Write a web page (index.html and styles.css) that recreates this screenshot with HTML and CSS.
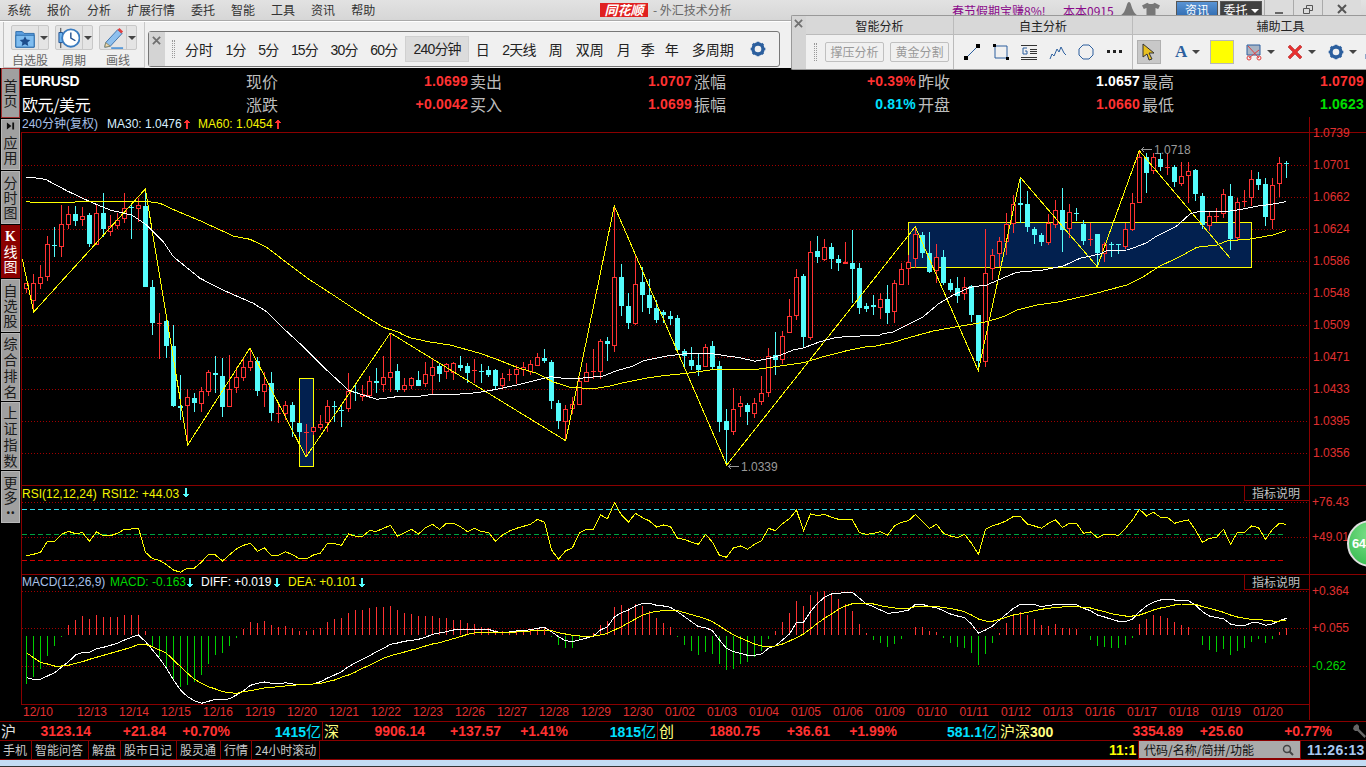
FILE: index.html
```html
<!DOCTYPE html>
<html lang="zh-CN">
<head>
<meta charset="utf-8">
<title>同花顺 - 外汇技术分析</title>
<link rel="stylesheet" href="styles.css">
</head>
<body>
<div class="app">
  <header class="menubar">
    <nav class="menu">
      <span>系统</span><span>报价</span><span>分析</span><span>扩展行情</span><span>委托</span><span>智能</span><span>工具</span><span>资讯</span><span>帮助</span>
    </nav>
    <span class="logo">同花顺</span>
    <span class="apptitle">- 外汇技术分析</span>
    <span class="promo">春节假期宝赚8%!</span>
    <span class="promo user">本本0915</span>
    <svg class="topicon first" viewBox="0 0 18 14"><path d="M9 0c2 0 2 4 4 8 1 3 3 4 5 6H0c2-2 4-3 5-6 2-4 2-8 4-8z"/></svg>
    <svg class="topicon" viewBox="0 0 20 14"><path d="M6 0c1 2 7 2 8 0l6 3-2 4-3-1v8H5V6L2 7 0 3z"/></svg>
    <span class="topbtn blue">资讯</span>
    <span class="topbtn dark">委托<i class="caret white"></i></span>
    <span class="winbtn"><svg viewBox="0 0 12 12"><path d="M2 9h8v2H2z"/></svg></span>
    <span class="winbtn"><svg viewBox="0 0 12 12"><path class="ol" d="M1.5 5.5h6v5h-6zM4.5 5V2.5h6v5H8"/></svg></span>
    <span class="winbtn wide"><svg viewBox="0 0 12 12"><path class="ol thick" d="M2 2l8 8M10 2l-8 8"/></svg></span>
  </header>

  <div class="toolbar">
    <div class="bigtools">
      <div class="bigtool">
        <div class="split">
          <svg class="bigicon" viewBox="0 0 24 24"><path d="M2 5h7l2 2h11v15H2z" fill="#5b9fe0" stroke="#2a6aa8"/><path d="M2 9h20v13H2z" fill="#7fbdf0" stroke="#2a6aa8"/><path d="M12 10l1.800 3.600 4 .5-3 2.700.8 4-3.600-2-3.600 2 .8-4-3-2.700 4-.5z" fill="#1e4d8c"/></svg>
          <span class="arrowcell"><i class="caret"></i></span>
        </div>
        <span class="cap">自选股</span>
      </div>
      <div class="bigtool">
        <div class="split">
          <svg class="bigicon" viewBox="0 0 24 24"><path d="M3 1v22" stroke="#333" fill="none"/><path d="M1 6h4v11H1z" fill="#6db3ee" stroke="#1e4d8c"/><circle cx="14" cy="12" r="9.500" fill="#fff" stroke="#3a7cc0" stroke-width="2"/><path d="M14 6v6l5 3" fill="none" stroke="#1e4d8c" stroke-width="1.500"/></svg>
          <span class="arrowcell"><i class="caret"></i></span>
        </div>
        <span class="cap">周期</span>
      </div>
      <div class="bigtool">
        <div class="split">
          <svg class="bigicon" viewBox="0 0 24 24"><path d="M4 17L17 3l5 4L9 21l-6 1z" fill="#8ec0ee" stroke="#3a70a8"/><path d="M17 3l2-2 4 4-2 2z" fill="#e04040"/><path d="M4 17l5 4-6 1z" fill="#f0d8b0" stroke="#886"/><path d="M10 23h13" stroke="#5a9ad8" stroke-width="2"/></svg>
          <span class="arrowcell"><i class="caret"></i></span>
        </div>
        <span class="cap">画线</span>
      </div>
    </div>
    <div class="periods">
      <span class="closecol"><svg viewBox="0 0 10 10"><path class="ol thick grayx" d="M1 1l8 8M9 1L1 9"/></svg></span>
      <span class="grip"></span>
      <span class="p p1">分时</span><span class="p d">1分</span><span class="p d">5分</span><span class="p d">15分</span><span class="p d">30分</span><span class="p d">60分</span>
      <span class="p d sel">240分钟</span><span class="p">日</span><span class="p d">2天线</span><span class="p">周</span><span class="p">双周</span><span class="p">月</span><span class="p tight">季</span><span class="p tight">年</span><span class="p">多周期</span>
      <svg class="gear" viewBox="0 0 24 24"><circle cx="12" cy="12" r="7.500" fill="none" stroke="#2c5f9e" stroke-width="5"/><path class="teeth" d="M12 1v22M1 12h22M4.200 4.200l15.600 15.600M19.800 4.200L4.200 19.800"/></svg>
    </div>
  </div>

  <div class="floatpanel">
    <span class="fclose"><svg viewBox="0 0 10 10"><path class="ol thick grayx" d="M1 1l8 8M9 1L1 9"/></svg></span>
    <section class="fsec s1">
      <h3>智能分析</h3>
      <div class="fbody">
        <span class="grip small"></span>
        <span class="fbtn">撑压分析</span><span class="fbtn">黄金分割</span>
      </div>
    </section>
    <section class="fsec s2">
      <h3>自主分析</h3>
      <div class="fbody tools2">
        <svg class="ti" viewBox="0 0 16 16"><path d="M2 14L14 2" stroke="#2c5f9e" fill="none"/><path d="M0 12h4v4H0zM12 0h4v4h-4z"/></svg>
        <svg class="ti" viewBox="0 0 16 16"><path d="M2 2h12v12H2z" stroke="#2c5f9e" fill="none"/><path d="M0 0h3v3H0zM13 13h3v3h-3z"/></svg>
        <svg class="ti" viewBox="0 0 16 16"><path d="M0 15.500h16M0 13.500h16M9 9.500h7M9 7.500h7M9 5.500h7M0 1.500h16" stroke="#333" fill="none"/><path d="M6 4H2v6h4V7H4" stroke="#2c5f9e" fill="none"/></svg>
        <svg class="ti" viewBox="0 0 16 16"><path d="M0 15l2-5 2 2 3-7 2 3 2-5 3 6 2 2" stroke="#2c5f9e" fill="none"/></svg>
        <svg class="ti" viewBox="0 0 16 16"><path d="M5 1h6l4 4v6l-4 4H5l-4-4V5z" stroke="#2c5f9e" fill="none"/></svg>
        <svg class="ti" viewBox="0 0 16 16"><path d="M0 6h3v3H0zM6 6h3v3H6zM12 6h3v3h-3z" fill="#222"/></svg>
      </div>
    </section>
    <section class="fsec s3">
      <h3>辅助工具</h3>
      <div class="fbody tools3">
        <span class="cursor"><svg viewBox="0 0 16 18"><path d="M2 1l11 9H8l3 6-3 1-2-6-4 3z" fill="#e8c020" stroke="#333"/></svg></span>
        <span class="tool afont"><b>A</b><i class="caret"></i></span>
        <span class="swatch"></span>
        <span class="tool"><svg class="ti" viewBox="0 0 16 16"><path d="M1 1h13v10H1z" fill="#a8b4c4" stroke="#2c5f9e"/><path d="M2 2l11 12M13 6L3 14" stroke="#e04040" fill="none"/><circle cx="3" cy="14" r="2" fill="none" stroke="#e04040"/><circle cx="13" cy="14" r="2" fill="none" stroke="#e04040"/></svg><i class="caret"></i></span>
        <span class="tool"><svg class="ti" viewBox="0 0 16 16"><path d="M3 1l5 5 5-5 2 2-5 5 5 5-2 2-5-5-5 5-2-2 5-5-5-5z" fill="#e83030" stroke="#a02020" stroke-width=".5"/></svg><i class="caret"></i></span>
        <span class="tool"><svg class="ti" viewBox="0 0 24 24"><circle cx="12" cy="12" r="7.500" fill="none" stroke="#2c5f9e" stroke-width="5"/><path class="teeth" d="M12 1v22M1 12h22M4.200 4.200l15.600 15.600M19.800 4.200L4.200 19.800"/></svg><i class="caret"></i></span>
        <svg class="ti partial" viewBox="0 0 16 16"><path d="M1 0v16M0 10h3v5H0z" stroke="#2c5f9e" fill="none"/></svg>
      </div>
    </section>
  </div>

  <main class="workspace">
    <aside class="sidetabs">
      <div class="tab t-home">首页</div>
      <div class="tab t-app"><svg class="mini" viewBox="0 0 10 8"><path d="M1 0l5 4-5 4zM7 0h2v8H7z"/></svg><span>应用</span></div>
      <div class="tab t3">分时图</div>
      <div class="tab t3 active"><b class="kchar">K</b>线图</div>
      <div class="tab t3">自选股</div>
      <div class="tab t4">综合排名</div>
      <div class="tab t4">上证指数</div>
      <div class="tab t-more">更多<span class="dots">..</span></div>
    </aside>
    <section class="content">
      <div class="quotes">
        <div class="qname">EURUSD</div>
        <div class="qc"><span class="ql">现价</span><span class="qv red">1.0699</span></div>
        <div class="qc"><span class="ql">卖出</span><span class="qv red">1.0707</span></div>
        <div class="qc"><span class="ql">涨幅</span><span class="qv red">+0.39%</span></div>
        <div class="qc"><span class="ql">昨收</span><span class="qv white">1.0657</span></div>
        <div class="qc"><span class="ql">最高</span><span class="qv red">1.0709</span></div>
        <div class="qname cn">欧元/美元</div>
        <div class="qc"><span class="ql">涨跌</span><span class="qv red">+0.0042</span></div>
        <div class="qc"><span class="ql">买入</span><span class="qv red">1.0699</span></div>
        <div class="qc"><span class="ql">振幅</span><span class="qv cyan">0.81%</span></div>
        <div class="qc"><span class="ql">开盘</span><span class="qv red">1.0660</span></div>
        <div class="qc"><span class="ql">最低</span><span class="qv green">1.0623</span></div>
      </div>
      <div class="chartwrap">
        <svg id="chart" class="chart" viewBox="21 117 1345 603" width="1345" height="603">
          <g id="grid"></g>
          <rect class="zone" x="299.500" y="378.500" width="14" height="88"/>
          <rect class="zone" x="908.500" y="222.500" width="343" height="45"/>
          <g id="plots"></g>
          <g class="frame">
            <path d="M21.500 132.500H1309.500V704.500H21.500zM21.500 485.500H1366M21.500 574.500H1366M1309.500 117V720M1309.500 132.500H1366"/>
            <path d="M1244.500 485.500V500.500H1309M1244.500 574.500V589.500H1309"/>
          </g>
          <g class="t12">
            <text class="c-blue" x="22" y="128">240分钟(复权)</text>
            <text class="c-ice" x="107" y="128">MA30: 1.0476</text>
            <text class="c-yel" x="198" y="128">MA60: 1.0454</text>
            <text class="c-yel" x="22" y="498">RSI(12,12,24)</text>
            <text class="c-yel" x="102" y="498">RSI12: +44.03</text>
            <text class="c-blue" x="22" y="586">MACD(12,26,9)</text>
            <text class="c-grn" x="110" y="586">MACD: -0.163</text>
            <text class="c-wht" x="201" y="586">DIFF: +0.019</text>
            <text class="c-yel" x="288" y="586">DEA: +0.101</text>
            <text class="c-gry" x="1252" y="498">指标说明</text>
            <text class="c-gry" x="1252" y="587">指标说明</text>
            <text class="c-note" x="1154" y="154">1.0718</text>
            <text class="c-note" x="741" y="471">1.0339</text>
          </g>
          <path class="arrow up" d="M187 119l3 4h-2v6h-2v-6h-2zM278 119l3 4h-2v6h-2v-6h-2z"/>
          <path class="arrow dn" d="M186 498l3-4h-2v-6h-2v6h-2zM190 588l3-4h-2v-6h-2v6h-2zM277 588l3-4h-2v-6h-2v6h-2zM362 588l3-4h-2v-6h-2v6h-2z"/>
          <path class="note" d="M1141 149.500h11M1141 149.500l3-2M1141 149.500l3 2M728 466.500h11M728 466.500l3-2M728 466.500l3 2"/>
          <g id="yaxis" class="t12 c-axis"></g>
          <g class="t12 c-axis">
            <text x="1312" y="506">+76.43</text><text x="1312" y="541">+49.01</text>
            <text x="1312" y="595">+0.364</text><text x="1312" y="632">+0.055</text><text class="c-grn" x="1312" y="670">-0.262</text>
          </g>
          <g id="xaxis" class="t12 c-axis xa"></g>
        </svg>
        <div class="ball">64</div>
      </div>
    </section>
  </main>

  <div class="indexrow">
    <span class="ixn">沪</span><span class="num">3123.14</span><span class="num">+21.84</span><span class="num">+0.70%</span><span class="vol sep">1415<em>亿</em></span>
    <span class="ixn y">深</span><span class="num">9906.14</span><span class="num">+137.57</span><span class="num">+1.41%</span><span class="vol sep">1815<em>亿</em></span>
    <span class="ixn y">创</span><span class="num">1880.75</span><span class="num">+36.61</span><span class="num">+1.99%</span><span class="vol sep">581.1<em>亿</em></span>
    <span class="ixn y">沪深<b>300</b></span><span class="num">3354.89</span><span class="num">+25.60</span><span class="num">+0.77%</span>
    <svg class="wrench" viewBox="0 0 14 14"><path d="M1 2l3-2 2 2v3l7 7-1.500 2L4.500 7H2L0 5z"/></svg>
  </div>

  <footer class="bottombar">
    <span class="bt">手机</span><span class="bt">智能问答</span><span class="bt">解盘</span><span class="bt">股市日记</span><span class="bt">股灵通</span><span class="bt">行情</span><span class="bt small">24小时滚动</span>
    <span class="ticker">11:1</span>
    <span class="search">代码/名称/简拼/功能<svg viewBox="0 0 12 12"><circle cx="5" cy="5" r="3.500" fill="none" stroke="#444" stroke-width="1.500"/><path d="M7.500 7.500L11 11" stroke="#444" stroke-width="2"/></svg></span>
    <span class="clock">11:26:13</span>
  </footer>
  <div class="strip"></div>
</div>
<script src="chart.js"></script>
</body>
</html>
```

FILE: styles.css
```css
* { box-sizing: border-box; }
html, body { margin: 0; padding: 0; background: #000; }
body { width: 1366px; height: 767px; overflow: hidden; font-family: "Noto Sans CJK SC", "Liberation Sans", sans-serif; }
.app { position: relative; width: 1366px; height: 767px; display: flex; flex-direction: column; background: #000; }

/* menu bar */
.menubar { height: 21px; display: flex; align-items: flex-start; background: linear-gradient(#e2e2e2, #d6d6d6); border-bottom: 1px solid #aaa; overflow: hidden; flex: none; }
.menu { display: flex; gap: 16px; padding-left: 7px; font-size: 12px; line-height: 20px; color: #333; width: 600px; flex: none; }
.logo { margin-top: 3px; width: 48px; height: 14px; background: #e02020; color: #fff; font: italic bold 13px/14px "Noto Sans CJK SC", sans-serif; text-align: center; flex: none; }
.apptitle { margin-left: 5px; width: 85px; font-size: 12px; line-height: 20px; color: #666; white-space: nowrap; flex: none; }
.promo { margin-left: 214px; width: 92px; font-size: 12px; line-height: 22px; color: #8a0a8a; white-space: nowrap; flex: none; }
.promo.user { margin-left: 19px; width: 49px; }
.topicon { width: 18px; height: 14px; margin: 2px 4px 0 0; fill: #777; flex: none; }
.topicon.first { margin-left: 8px; }
.topbtn { margin: 1px 2px 0 0; width: 42px; height: 17px; font-size: 12px; line-height: 16px; color: #fff; text-align: center; flex: none; border: 1px solid #555; }
.topbtn.blue { margin-left: 12px; background: linear-gradient(#5a94d4, #2f6bb0); }
.topbtn.dark { background: #404040; }
.winbtn { width: 29px; height: 18px; display: flex; align-items: center; justify-content: center; background: #dcdcdc; border-left: 1px solid #aaa; border-bottom: 1px solid #aaa; flex: none; }
.winbtn.wide { width: 39px; }
.winbtn svg { width: 12px; height: 12px; fill: #666; }
.ol { fill: none; stroke: #555; stroke-width: 1; }
.ol.thick { stroke-width: 2; }
.ol.grayx { stroke: #707070; }

/* toolbar */
.toolbar { height: 47px; flex: none; display: flex; align-items: flex-start; background: #f0f0f0; border-top: 1px solid #fff; position: relative; }
.bigtools { width: 142px; height: 46px; margin-left: 3px; padding: 3px 0 0 7px; display: flex; gap: 6px; border-left: 1px solid #c0c0c0; border-right: 1px solid #c8c8c8; border-bottom: 1px solid #c0c0c0; flex: none; }
.bigtool { width: 38px; display: flex; flex-direction: column; align-items: center; }
.split { width: 38px; height: 25px; display: flex; background: #e4e4e4; border: 1px solid #c8c8c8; border-radius: 2px; }
.bigicon { width: 22px; height: 22px; margin: 1px 2px; flex: none; }
.arrowcell { flex: 1; border-left: 1px solid #c8c8c8; display: flex; align-items: center; justify-content: center; }
.caret { display: inline-block; width: 0; height: 0; border: 4px solid transparent; border-top: 4px solid #444; border-bottom: 0; }
.caret.white { border-top-color: #fff; margin-left: 3px; vertical-align: 2px; }
.cap { font-size: 12px; line-height: 17px; margin-top: 1px; color: #666; white-space: nowrap; }
.periods { margin: 9px 0 0 3px; width: 632px; height: 36px; display: flex; align-items: center; background: #f0f0f0; border: 1px solid #777; border-radius: 3px; font: 14px "Liberation Sans", "Noto Sans CJK SC", sans-serif; color: #222; flex: none; }
.closecol { width: 16px; align-self: stretch; background: #d4d4d4; padding: 4px 3px; flex: none; }
.closecol svg { display: block; width: 9px; height: 9px; }
.grip { width: 3px; height: 18px; margin: 0 0 0 7px; border-left: 1px dotted #999; border-right: 1px dotted #999; flex: none; }
.p { white-space: nowrap; margin-left: 13px; flex: none; }
.p.d { margin-left: 12.500px; letter-spacing: -.8px; }
.p.p1 { margin-left: 10px; }
.p.tight { margin-left: 10px; }
.p.sel { margin-left: 8px; padding: 0 7px; height: 26px; line-height: 25px; background: #dcdcdc; border: 1px solid #d0d0d0; }
.p.sel + .p { margin-left: 7px; }
.gear { width: 16px; height: 16px; margin-left: 16px; flex: none; }
.teeth { fill: none; stroke: #2c5f9e; stroke-width: 4; stroke-dasharray: 4 14; }

/* floating analysis panel */
.floatpanel { position: absolute; left: 791px; top: 15px; width: 575px; height: 55px; display: flex; background: #f0f0f0; border: 1px solid #999; border-right: 0; border-radius: 2px 0 0 2px; z-index: 2; }
.fclose { width: 14px; background: #d4d4d4; padding: 3px 2px; flex: none; }
.fclose svg { display: block; width: 9px; height: 9px; }
.fsec { display: flex; flex-direction: column; flex: none; border-right: 1px solid #bbb; }
.fsec h3 { margin: 0; height: 19px; font-size: 12px; font-weight: 400; line-height: 19px; text-align: center; color: #222; background: #d8d8d8; border-bottom: 1px solid #bbb; }
.s1 { width: 148px; }
.s2 { width: 179px; }
.s3 { width: 233px; border-right: 0; }
.s3 h3 { padding-left: 62px; }
.fbody { flex: 1; display: flex; align-items: center; overflow: hidden; }
.grip.small { margin: 0 8px; }
.fbtn { width: 59px; height: 20px; margin-right: 6px; font-size: 12px; line-height: 18px; text-align: center; color: #999; border: 1px solid #c0c0c0; border-radius: 2px; flex: none; }
.tools2 { padding-left: 10px; gap: 12.500px; }
.ti { width: 16px; height: 16px; flex: none; overflow: visible; }
.tools3 { padding-left: 4px; }
.cursor { width: 24px; height: 24px; background: #c8c8c8; border: 1px solid #b0b0b0; display: flex; align-items: center; justify-content: center; flex: none; }
.cursor svg { width: 16px; height: 18px; }
.tool { display: flex; align-items: center; gap: 5px; margin-left: 12px; flex: none; }
.afont { width: 28px; margin-left: 14px; }
.afont b { font: bold 17px "Liberation Serif", serif; color: #2c5f9e; }
.swatch { width: 24px; height: 24px; margin-left: 7px; background: #ff0; border: 1px solid #b8b8b8; flex: none; }
.partial { margin-left: 9px; }

/* workspace */
.workspace { height: 653px; flex: none; display: flex; background: #000; }
.sidetabs { width: 21px; flex: none; padding: 0 1px; display: flex; flex-direction: column; gap: 1px; }
.tab { width: 19px; display: flex; flex-direction: column; align-items: center; justify-content: center; background: #a0a0a0; color: #1c1c1c; font-size: 14px; line-height: 15px; text-align: center; word-break: break-all; line-break: anywhere; border: 1px solid #b8b8b8; overflow: hidden; }
.t-home { height: 50px; border-color: #a03030; }
.t-app { height: 51px; justify-content: space-between; padding: 2px 0 4px; }
.mini { width: 9px; height: 8px; fill: #111; flex: none; }
.t3 { height: 53px; }
.t4 { height: 68px; line-height: 16px; }
.t-more { height: 52px; justify-content: flex-start; padding-top: 3px; }
.dots { line-height: 7px; font-weight: 700; }
.tab.active { background: #8a0000; color: #fff; border-color: #8a0000; }
.kchar { font: bold 14px/15px "Liberation Serif", serif; }
.content { width: 1345px; flex: none; display: flex; flex-direction: column; }
.quotes { height: 49px; padding-top: 2px; display: grid; grid-template-columns: 225px repeat(5, 224px); grid-auto-rows: 23px; color: #c0c0c0; }
.qname { padding-left: 1px; font: bold 14px/22px "Liberation Sans", sans-serif; color: #fff; letter-spacing: -.3px; }
.qname.cn { font: 400 16px/23px "Noto Sans CJK SC", sans-serif; letter-spacing: -.4px; }
.qc { display: flex; justify-content: space-between; padding-right: 2px; }
.ql { font-size: 16px; line-height: 22px; color: #bdbdbd; }
.qv { font: bold 14px/22px "Liberation Sans", sans-serif; letter-spacing: .2px; }
.red { color: #ff3232; }
.white { color: #fff; }
.cyan { color: #00e0ff; }
.green { color: #00e000; }
.chartwrap { position: relative; height: 604px; overflow: hidden; }
.chart { display: block; }
.ball { position: absolute; left: 1326px; top: 403px; width: 47px; height: 47px; padding-left: 3px; border-radius: 50%; background: radial-gradient(circle at 50% 30%, #7fe08a, #2eb84a); border: 2px solid #e0e0e0; color: #fff; font: bold 13px/43px "Liberation Sans", sans-serif; letter-spacing: -.5px; }

/* chart drawing */
.zone { fill: #02204f; stroke: #ff0; stroke-width: 1; }
.gridline { stroke: #a00000; stroke-width: 1; stroke-dasharray: 1 2; shape-rendering: crispEdges; }
.frame path { fill: none; stroke: #8a0000; stroke-width: 1; shape-rendering: crispEdges; }
.dash { stroke-width: 1; stroke-dasharray: 5 3; fill: none; shape-rendering: crispEdges; }
.dash.cy { stroke: #32d8e8; }
.dash.gr { stroke: #00a040; }
.dash.rd { stroke: #d00000; }
.upbody { fill: #000; stroke: #ff3232; stroke-width: 1; shape-rendering: crispEdges; }
.upwick { fill: none; stroke: #ff3232; stroke-width: 1; shape-rendering: crispEdges; }
.dnbody { fill: #54fcfc; shape-rendering: crispEdges; }
.dnwick { fill: none; stroke: #54fcfc; stroke-width: 1; shape-rendering: crispEdges; }
.line { fill: none; stroke-width: 1; stroke-linejoin: miter; shape-rendering: crispEdges; }
.line.wh { stroke: #fff; }
.line.ye { stroke: #ff0; }
.line.zz { stroke: #ff0; }
.bar-r { stroke: #ff3232; fill: none; shape-rendering: crispEdges; }
.bar-g { stroke: #00d000; fill: none; shape-rendering: crispEdges; }
.note { fill: none; stroke: #999; stroke-width: 1; shape-rendering: crispEdges; }
.arrow { shape-rendering: crispEdges; }
.arrow.up { fill: #ff3232; }
.arrow.dn { fill: #54fcfc; }
.t12 text { font: 12px "Liberation Sans", "Noto Sans CJK SC", sans-serif; }
.c-blue { fill: #a8c0e8; }
.c-ice { fill: #d8f0ff; }
.c-yel { fill: #f4f400; }
.t12 .c-grn { fill: #00d800; }
.c-wht { fill: #fff; }
.c-gry { fill: #c0c0c0; }
.c-note { fill: #9a9a9a; }
.c-axis { fill: #e03030; }
.xa text { text-anchor: middle; }

/* index ticker row */
.indexrow { height: 20px; flex: none; display: grid; grid-template-columns: 22px 69px 75px 64px 93px 17px 85px 76px 67px 90px 18px 84px 70px 67px 102px 57px 127px 60px 89px 34px; border-top: 1px solid #8a0000; border-bottom: 1px solid #8a0000; align-items: center; }
.ixn { font-size: 15px; line-height: 18px; color: #e0e0e0; padding-left: 1px; white-space: nowrap; }
.ixn.y { color: #ffff80; }
.ixn b { font: bold 14px "Liberation Sans", sans-serif; }
.num { font: bold 14px/18px "Liberation Sans", sans-serif; color: #ff3232; text-align: right; }
.vol { font: bold 14px/18px "Liberation Sans", sans-serif; color: #00e0ff; text-align: right; }
.vol em { font: 400 15px/18px "Noto Sans CJK SC", sans-serif; }
.sep { border-right: 1px solid #8a0000; height: 18px; padding-right: 1px; }
.wrench { width: 14px; height: 14px; margin-left: 21px; fill: #666; }

/* bottom bar */
.bottombar { height: 19px; flex: none; display: flex; align-items: stretch; border-bottom: 1px solid #8a0000; }
.bt { padding: 0 3px; font-size: 12px; line-height: 18px; color: #c8c8c8; border-right: 1px solid #8a0000; white-space: nowrap; }
.bt:nth-child(1) { width: 32px; }
.bt:nth-child(2) { width: 57px; }
.bt:nth-child(3) { width: 32px; }
.bt:nth-child(4) { width: 56px; }
.bt:nth-child(5) { width: 44px; }
.bt:nth-child(6) { width: 31px; }
.bt.small { width: 68px; }
.ticker { margin-left: 789px; width: 29px; font: bold 14px/18px "Liberation Sans", sans-serif; color: #ff0; overflow: hidden; white-space: nowrap; flex: none; }
.search { width: 163px; display: flex; align-items: center; justify-content: space-between; padding: 0 6px 0 5px; background: #aaa; border: 1px solid #8a0000; border-top: 0; color: #111; font-size: 12px; flex: none; }
.search svg { width: 12px; height: 12px; }
.clock { margin-left: 6px; font: bold 14px/18px "Liberation Sans", sans-serif; color: #a8c8f0; letter-spacing: .3px; white-space: nowrap; }
.strip { flex: 1; background: #c4dcf4; border-bottom: 1px solid #333; }
```

FILE: chart.js
```javascript
(function () {
  var NS = 'http://www.w3.org/2000/svg';
  var grid = document.getElementById('grid');
  var plots = document.getElementById('plots');
  var yaxis = document.getElementById('yaxis');
  var xaxis = document.getElementById('xaxis');

  function el(parent, tag, attrs, text) {
    var n = document.createElementNS(NS, tag);
    for (var k in attrs) n.setAttribute(k, attrs[k]);
    if (text) n.textContent = text;
    parent.appendChild(n);
    return n;
  }
  function xi(i) { return 26.5 + 7 * i; }

  // gridlines
  [165, 197, 229, 261, 293, 325, 357, 389, 421, 453, 502, 537, 591, 628, 666].forEach(function (y) {
    el(grid, 'line', { 'class': 'gridline', x1: 22, x2: 1309, y1: y + 0.5, y2: y + 0.5 });
  });
  el(grid, 'line', { 'class': 'dash cy', x1: 22, x2: 1283, y1: 509.5, y2: 509.5 });
  el(grid, 'line', { 'class': 'dash gr', x1: 22, x2: 1283, y1: 534.5, y2: 534.5 });
  el(grid, 'line', { 'class': 'dash rd', x1: 22, x2: 1283, y1: 560.5, y2: 560.5 });

  // candles: [red?, wickTop, bodyTop, bodyBottom, wickBottom] in 3x crop rows from y=130
  var K = [
    [1,458,460,475,490],[1,432,458,510,540],[1,405,440,458,477],[1,318,343,437,452],[0,290,345,348,380],[1,225,283,347,380],[1,228,253,283,298],[0,228,252,273,288],[1,232,257,268,288],[0,250,255,342,350],[1,222,250,342,345],[0,188,250,297,322],[1,255,287,302,318],[1,250,270,285,298],[1,188,235,265,278],[0,225,231,233,327],[1,205,226,233,275],[0,180,228,470,470],[0,450,471,578,615],[1,548,579,579,686],[0,570,573,648,685],[0,585,648,828,832],[0,735,829,833,870],[1,778,802,824,945],[0,790,805,819,846],[1,772,784,818,846],[1,720,727,782,797],[0,678,730,735,790],[0,684,738,830,860],[1,675,778,828,830],[1,712,742,772,790],[1,688,712,740,752],[1,655,693,710,722],[0,680,693,782,798],[1,725,763,784,832],[0,725,760,848,872],[1,820,850,850,878],[1,812,826,848,870],[0,815,825,876,920],[0,880,880,905,920],[1,882,907,907,975],[1,892,892,904,915],[1,855,882,890,900],[1,810,829,875,905],[0,812,827,832,875],[0,825,840,840,890],[1,728,782,835,845],[0,760,786,790,812],[1,765,793,798,812],[1,738,754,794,800],[0,714,753,760,788],[1,678,742,763,785],[1,610,725,742,785],[0,703,723,780,785],
    [1,744,766,776,786],[1,742,745,764,776],[0,724,750,767,768],[1,696,733,760,770],[1,688,712,734,792],[0,702,708,732,756],[1,700,701,724,748],[1,697,700,727,750],[0,678,705,713,722],[0,700,708,729,758],[1,687,721,721,760],[0,702,723,727,760],[0,708,720,735,742],[0,716,720,768,780],[1,730,745,765,776],[1,716,733,733,752],[1,706,717,731,762],[1,696,710,717,738],[1,690,703,722,736],[1,670,682,706,708],[0,658,685,692,700],[0,690,696,812,838],[0,810,820,872,897],[1,825,838,872,932],[1,800,821,835,852],[1,740,752,821,822],[1,698,727,752,752],[1,656,724,724,748],[1,628,634,722,748],[0,622,632,641,692],[1,230,442,646,665],[0,403,441,527,558],[0,490,528,578,596],[1,375,461,578,586],[0,412,457,494,546],[0,448,496,533,552],[0,510,535,570,578],[0,540,547,554,580],[0,544,558,566,584],[0,556,565,660,665],[0,658,663,677,710],[0,652,690,708,720],[0,672,706,721,738],[1,642,650,708,712],[0,634,648,711,720],[0,694,709,875,905],[0,838,874,899,1000],[1,775,836,903,915],[1,798,818,829,860],[0,820,826,846,885],[1,805,818,848,863],[1,738,788,814,825],[1,655,677,785,800],[0,606,674,689,735],[1,604,619,688,702],[1,507,557,605,608],[1,418,440,554,570],[0,433,438,620,654],[1,334,365,620,630],[0,318,363,380,398],[1,328,350,386,392],[0,340,352,386,417],[0,376,388,398,422],[1,336,396,400,402],[0,300,400,416,518],[0,400,415,533,552],[0,518,529,538,546],[0,496,526,530,554],
    [1,490,508,530,568],[0,465,508,548,582],[1,450,460,544,580],[1,400,418,461,465],[1,375,395,414,465],[1,290,313,385,415],[0,306,316,370,385],[0,306,370,425,428],[1,342,382,420,460],[0,360,382,460,465],[0,448,460,480,485],[0,442,475,497,518],[1,440,470,488,510],[0,465,469,555,575],[0,555,556,692,720],[1,298,428,692,712],[1,358,374,415,450],[1,322,332,370,412],[1,250,281,332,375],[1,195,222,280,310],[0,142,219,224,278],[0,184,223,290,305],[0,292,297,315,342],[0,310,316,335,347],[1,252,280,335,345],[1,210,241,282,295],[0,175,240,300,365],[1,222,247,295,325],[0,235,248,248,272],[0,270,283,332,345],[1,278,328,328,347],[0,312,313,370,405],[1,335,343,370,395],[0,335,342,342,382],[0,342,343,343,372],[1,280,298,347,358],[1,190,220,297,303],[1,62,80,217,218],[0,68,80,128,190],[1,70,82,120,132],[0,70,87,110,122],[1,70,110,110,135],[0,105,111,155,172],[1,95,137,158,168],[1,97,124,136,218],[0,118,121,191,212],[0,190,198,285,298],[1,245,259,284,302],[1,235,257,257,275],[1,178,193,250,265],[0,162,198,327,360],[1,205,217,322,330],[1,180,212,212,230],[1,120,148,202,228],[0,126,148,165,180],[0,145,162,262,288],[1,145,166,266,297],[1,82,100,160,200],[0,93,100,100,144]
  ];
  function my(v) { return Math.round(130 + v / 3); }
  var upW = '', upB = '', dnW = '', dnB = '';
  K.forEach(function (c, i) {
    var x = xi(i), t = my(c[1]), a = my(c[2]), b = my(c[3]), l = my(c[4]);
    var left = x - 2.5;
    if (c[0]) {
      upW += 'M' + x + ' ' + t + 'V' + a + 'M' + x + ' ' + b + 'V' + l;
      if (b <= a) upW += 'M' + left + ' ' + (a + 0.5) + 'h5';
      else upB += 'M' + (x - 2) + ' ' + (a + 0.5) + 'h4V' + (b + 0.5) + 'h-4z';
    } else {
      dnW += 'M' + x + ' ' + t + 'V' + l;
      dnB += 'M' + left + ' ' + a + 'h5V' + Math.max(b, a + 1) + 'h-5z';
    }
  });
  el(plots, 'path', { 'class': 'dnwick', d: dnW });
  el(plots, 'path', { 'class': 'dnbody', d: dnB });
  el(plots, 'path', { 'class': 'upwick', d: upW });
  el(plots, 'path', { 'class': 'upbody', d: upB });

  function pts(list, ox, oy) {
    var out = [];
    for (var i = 0; i < list.length; i += 2) out.push((ox + list[i] / 3).toFixed(1) + ',' + (oy + list[i + 1] / 3).toFixed(1));
    return out.join(' ');
  }
  function poly(parent, cls, p) { el(parent, 'polyline', { 'class': cls, points: p }); }

  // moving averages on the main panel
  var ma30 = pts([78,142,120,145,140,150,200,182,270,215,330,240,395,255,440,285,490,335,520,380,600,445,680,485,760,520,800,545,850,595,910,650,980,720,1045,780,1090,795,1130,808,1200,799], 0, 130) + ' ' +
    pts([0,798,50,800,100,793,170,793,230,788,290,778,350,765,420,748,450,740,490,745,540,745,610,738,650,722,700,708,730,692,800,678,850,672,930,670,975,677,1020,683,1065,694,1130,680,1180,660,1210,654,1260,635,1310,622,1380,618,1440,615], 400, 130) + ' ' +
    pts([0,613,40,606,80,585,130,560,175,522,220,495,270,472,320,465,390,435,410,427,490,420,550,408,600,385,660,372,680,362,740,360,770,350,800,338,830,318,890,288,930,252,960,243,1050,243,1090,237,1135,228,1180,222,1217,215], 880, 130);
  var ma60 = pts([78,214,110,219,190,218,240,215,370,214,440,214,480,220,530,243,600,272,700,318,750,328,800,352,850,390,930,450,1000,495,1070,542,1150,592,1200,608], 0, 130) + ' ' +
    pts([0,610,30,623,90,636,150,645,240,670,290,688,350,712,410,730,460,756,510,772,580,776,630,768,670,758,740,744,800,736,860,730,930,720,1070,718,1140,708,1210,698,1270,680,1340,662,1400,650,1440,647], 400, 130) + ' ' +
    pts([0,644,30,640,90,622,160,603,230,590,320,575,370,560,410,540,470,525,540,515,640,492,740,465,790,440,840,408,900,380,950,352,1010,345,1040,333,1110,327,1180,315,1217,302], 880, 130);
  var zigzag = '22.3,259 33.7,312 145.3,189 187.7,445 250,348 306,457 390.3,333 565.7,440.7 614.3,206 726.7,465 915.3,226.7 978.3,370.7 1020.3,177.3 1097.3,266.7 1139.3,150.7 1230.3,258.3';
  poly(plots, 'line zz', zigzag);
  poly(plots, 'line wh', ma30);
  poly(plots, 'line ye', ma60);

  // series sampled once per candle, in 3x crop rows from y=480
  function series(vals) {
    return vals.map(function (v, i) { return xi(i) + ',' + (480 + v / 3).toFixed(1); }).join(' ');
  }
  var rsi = [227,223,217,184,184,163,154,161,158,184,155,168,167,160,148,147,145,217,236,241,254,270,277,264,264,246,223,225,243,224,207,196,190,214,204,227,226,215,224,236,236,225,219,190,191,196,162,169,169,152,154,145,136,169,158,148,162,143,133,148,130,130,140,
    155,145,155,157,184,165,153,145,139,133,118,127,210,238,213,203,158,148,148,105,116,68,105,126,100,113,123,141,135,140,175,178,187,193,163,187,226,232,204,198,208,193,182,145,152,131,116,90,152,102,107,103,112,118,118,120,158,163,160,155,166,138,127,122,
    103,125,145,133,160,168,173,163,190,223,148,137,131,122,109,110,132,138,145,130,120,142,130,130,160,156,173,163,163,166,145,120,88,108,97,112,112,130,124,120,150,187,175,172,148,193,157,157,138,143,178,148,130,133];
  poly(plots, 'line ye', series(rsi));

  var bars = [612,590,568,528,498,470,435,420,408,418,405,410,412,410,405,405,405,452,500,530,560,600,622,615,605,585,552,525,518,497,473,446,427,430,423,435,441,437,444,453,452,450,444,426,417,413,400,390,390,384,380,380,378,390,400,403,408,408,408,413,413,420,
    420,430,433,441,445,450,452,455,455,453,450,447,445,470,495,503,503,480,465,460,435,423,380,375,385,372,378,392,414,430,441,470,495,512,525,515,522,552,570,566,552,545,532,513,476,453,425,400,362,377,345,335,333,340,357,372,393,432,458,480,488,500,492,476,465,
    441,441,453,456,473,490,500,503,518,555,522,490,460,430,405,396,405,417,435,438,432,444,443,447,468,480,497,500,503,504,495,473,432,418,405,408,414,426,435,441,464,495,510,515,507,525,512,503,485,478,490,477,456,445];
  var rd = '', gd = '';
  bars.forEach(function (v, i) {
    var y = Math.round(480 + v / 3), x = xi(i);
    if (v < 465) rd += 'M' + x + ' ' + y + 'V635';
    else if (v > 465) gd += 'M' + x + ' 636V' + y;
  });
  el(plots, 'path', { 'class': 'bar-r', d: rd });
  el(plots, 'path', { 'class': 'bar-g', d: gd });

  var diff = [593,598,598,588,578,562,545,525,517,517,506,502,496,490,480,472,465,485,510,535,565,600,630,650,662,670,664,658,660,656,645,632,616,610,606,610,612,608,612,613,613,612,605,594,585,575,560,548,538,527,515,505,493,489,484,481,478,472,463,459,455,450,448,
    448,448,448,448,455,458,456,453,452,449,445,442,455,470,482,485,480,474,468,450,440,410,398,390,378,370,370,376,378,382,395,410,425,440,443,452,480,505,515,520,526,526,522,505,497,480,462,427,427,395,370,352,342,340,337,337,355,372,380,390,400,398,395,390,
    373,373,380,383,392,402,408,413,432,460,450,438,420,402,385,373,373,374,380,376,374,375,373,374,385,392,405,411,418,424,425,417,395,378,367,360,358,360,360,362,375,395,408,413,416,432,437,437,428,428,436,432,422,415];
  var dea = [518,533,547,552,558,558,556,550,545,538,532,526,520,514,508,502,493,493,500,510,520,540,560,580,598,610,620,627,635,638,640,635,632,628,624,622,620,618,616,614,614,612,610,605,600,592,585,576,565,556,545,535,527,522,516,510,505,498,492,488,482,476,470,
    463,459,458,458,458,458,458,456,455,453,451,450,452,458,462,466,468,470,468,465,460,450,440,428,417,406,398,394,392,391,392,398,404,410,416,425,438,452,464,474,483,492,498,499,498,492,483,473,462,446,430,415,402,388,378,371,370,370,372,377,381,384,385,385,
    380,379,379,379,383,385,390,395,405,417,423,424,418,412,405,401,397,392,388,385,382,381,380,380,382,384,390,395,401,405,408,408,405,398,390,384,380,375,372,372,373,380,385,391,397,405,411,415,418,418,421,423,423,420];
  poly(plots, 'line wh', series(diff));
  poly(plots, 'line ye', series(dea));

  // axes
  ['1.0739','1.0701','1.0662','1.0624','1.0586','1.0548','1.0509','1.0471','1.0433','1.0395','1.0356'].forEach(function (t, i) {
    el(yaxis, 'text', { x: 1313, y: 137 + 32 * i }, t);
  });
  el(xaxis, 'text', { x: 38, y: 716 }, '12/10');
  ['12/13','12/14','12/15','12/16','12/19','12/20','12/21','12/22','12/23','12/26','12/27','12/28','12/29','12/30','01/02','01/03','01/04','01/05','01/06','01/09','01/10','01/11','01/12','01/13','01/16','01/17','01/18','01/19','01/20'].forEach(function (t, i) {
    el(xaxis, 'text', { x: 92 + 42 * i, y: 716 }, t);
  });
})();
```
